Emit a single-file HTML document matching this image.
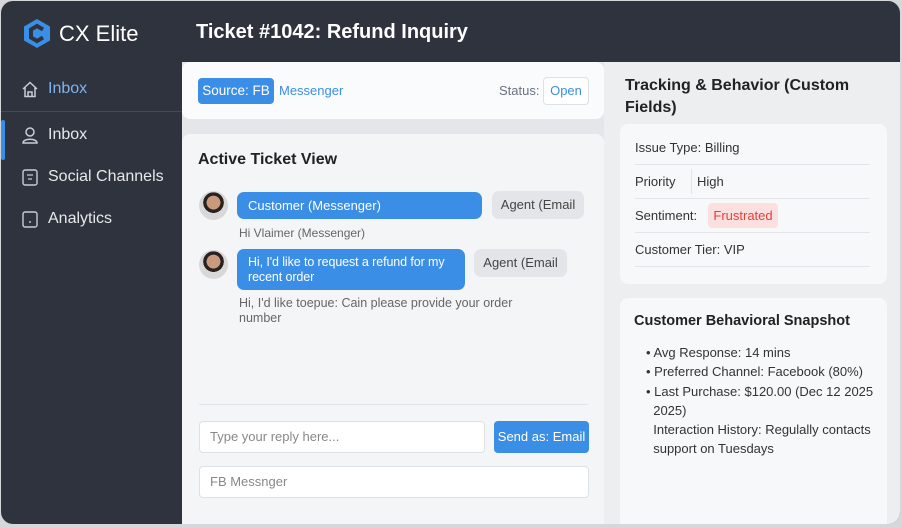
<!DOCTYPE html>
<html><head><style>
*{box-sizing:border-box;margin:0;padding:0}
body{width:902px;height:528px;background:#d5d7da;font-family:"Liberation Sans",sans-serif;overflow:hidden;position:relative}
.frame{position:absolute;left:1px;top:1px;width:899px;height:523px;border-radius:12px;background:#2e333d;overflow:hidden}
.logo{position:absolute;left:22px;top:17px}
.brand{position:absolute;left:58px;top:20px;color:#fff;font-size:22px}
.title{position:absolute;left:195px;top:20px;color:#fff;font-size:20px;font-weight:bold}
.nav{position:absolute;left:0;width:181px;color:#e6e8ec;font-size:16px}
.nav span{position:absolute;left:47px;white-space:nowrap}
.main{position:absolute;left:181px;top:61px;width:422px;height:462px;background:#e4e6e9}
.right{position:absolute;left:603px;top:61px;width:296px;height:462px;background:#eceef0}
.card{position:absolute;background:#f7f8fa;border-radius:8px}
.blue{background:#3a8ee6;color:#fff}
.gray{background:#e3e5e8;color:#444;border-radius:7px}
.t{position:absolute;white-space:nowrap}
</style></head><body>
<div class="frame">
<svg class="logo" width="28" height="31" viewBox="0 0 28 31"><path d="M14 1 L27 8.5 V22.5 L14 30 L1 22.5 V8.5Z" fill="#3a8ee6"/><path d="M20 11.5 L14 8 L8 11.5 V19.5 L14 23 L20 19.5" fill="none" stroke="#2e333d" stroke-width="4"/></svg>
<div class="brand">CX Elite</div>
<div class="title">Ticket #1042: Refund Inquiry</div>
<div style="position:absolute;left:0;top:110px;width:181px;height:1px;background:#434955"></div>
<div style="position:absolute;left:0;top:119px;width:4px;height:40px;background:#3a8ee6;border-radius:2px"></div>
<div class="nav" style="top:79px"><svg style="position:absolute;left:20px;top:1px" width="18" height="17" viewBox="0 0 18 17"><path d="M2 8 L9 1.5 L16 8 M4 6.5 V15.5 H14 V6.5 M7 15.5 V11 H11 V15.5" fill="none" stroke="#c8ccd3" stroke-width="1.5"/></svg><span style="color:#7fb4ee">Inbox</span></div>
<div class="nav" style="top:125px"><svg style="position:absolute;left:20px;top:0" width="18" height="18" viewBox="0 0 18 18"><circle cx="9" cy="6" r="4" fill="none" stroke="#c8ccd3" stroke-width="1.5"/><path d="M2 17 C2 12 16 12 16 17 Z" fill="none" stroke="#c8ccd3" stroke-width="1.5"/></svg><span>Inbox</span></div>
<div class="nav" style="top:167px"><svg style="position:absolute;left:21px;top:1px" width="16" height="17" viewBox="0 0 16 17"><rect x="1" y="1" width="14" height="15" rx="2" fill="none" stroke="#c8ccd3" stroke-width="1.4"/><path d="M5 6H11M6 10H10" stroke="#c8ccd3" stroke-width="1.2"/></svg><span>Social Channels</span></div>
<div class="nav" style="top:209px"><svg style="position:absolute;left:21px;top:1px" width="16" height="17" viewBox="0 0 16 17"><rect x="1" y="1" width="14" height="15" rx="2" fill="none" stroke="#c8ccd3" stroke-width="1.4"/><path d="M8 10V12" stroke="#c8ccd3" stroke-width="1.4"/></svg><span>Analytics</span></div>

<div class="main">
<div class="card" style="left:0;top:0;width:422px;height:57px;background:#fafbfc">
<div class="t blue" style="left:16px;top:16px;width:76px;height:26px;border-radius:4px;font-size:13.5px;line-height:26px;text-align:center">Source: FB</div>
<div class="t" style="left:97px;top:21px;color:#3a8ee6;font-size:13px">Messenger</div>
<div class="t" style="left:317px;top:21px;color:#6a7280;font-size:13px">Status:</div>
<div class="t" style="left:361px;top:15px;width:46px;height:28px;border:1px solid #dde0e4;border-radius:4px;background:#fff;color:#3a8ee6;font-size:13px;line-height:26px;text-align:center">Open</div>
</div>
<div class="card" style="left:0;top:72px;width:422px;height:395px;background:#f3f5f7">
<div class="t" style="left:16px;top:17px;font-size:16px;font-weight:bold;color:#222">Active Ticket View</div>
<div class="t" style="left:17px;top:57px;width:29px;height:29px;border-radius:50%;background:radial-gradient(circle at 50% 40%,#c99a7c 0 30%,#2a2220 31% 45%,#d8d8d8 46%)"></div>
<div class="t blue" style="left:55px;top:58px;width:245px;height:27px;border-radius:7px;font-size:13px;line-height:27px;padding-left:11px">Customer (Messenger)</div>
<div class="t gray" style="left:310px;top:57px;width:92px;height:28px;font-size:13px;line-height:28px;text-align:center">Agent (Email</div>
<div class="t" style="left:57px;top:92px;font-size:12px;color:#666">Hi Vlaimer (Messenger)</div>
<div class="t" style="left:17px;top:116px;width:29px;height:29px;border-radius:50%;background:radial-gradient(circle at 50% 40%,#c99a7c 0 30%,#2a2220 31% 45%,#d8d8d8 46%)"></div>
<div class="t blue" style="left:55px;top:115px;width:228px;height:41px;border-radius:7px;font-size:12.5px;line-height:15px;padding:6px 6px 6px 11px;white-space:normal;letter-spacing:-0.1px">Hi, I'd like to request a refund for my recent order</div>
<div class="t gray" style="left:292px;top:115px;width:93px;height:28px;font-size:13px;line-height:28px;text-align:center">Agent (Email</div>
<div class="t" style="left:57px;top:162px;width:300px;font-size:12.5px;color:#666;line-height:15px;white-space:normal">Hi, I'd like toepue: Cain please provide your order number</div>
<div class="t" style="left:17px;top:270px;width:389px;height:1px;background:#e0e3e7"></div>
<div class="t" style="left:17px;top:287px;width:286px;height:32px;border:1px solid #dde0e4;border-radius:4px;background:#fff;color:#888;font-size:13px;line-height:30px;padding-left:10px">Type your reply here...</div>
<div class="t blue" style="left:312px;top:287px;width:95px;height:32px;border-radius:4px;font-size:13px;line-height:32px;text-align:center">Send as: Email</div>
<div class="t" style="left:17px;top:332px;width:390px;height:32px;border:1px solid #dde0e4;border-radius:4px;background:#fff;color:#888;font-size:13px;line-height:30px;padding-left:10px">FB Messnger</div>
</div>
</div>

<div class="right">
<div class="t" style="left:21px;top:13px;width:250px;font-size:16px;font-weight:bold;color:#222;line-height:22px;white-space:normal">Tracking &amp; Behavior (Custom Fields)</div>
<div class="card" style="left:16px;top:62px;width:267px;height:160px">
<div class="t" style="left:15px;top:16px;font-size:13px;color:#333">Issue Type: Billing</div>
<div class="t" style="left:15px;top:40px;width:235px;height:1px;background:#e2e4e7"></div>
<div class="t" style="left:15px;top:50px;font-size:13px;color:#333">Priority</div>
<div class="t" style="left:71px;top:45px;width:1px;height:25px;background:#e2e4e7"></div>
<div class="t" style="left:77px;top:50px;font-size:13px;color:#333">High</div>
<div class="t" style="left:15px;top:74px;width:235px;height:1px;background:#e2e4e7"></div>
<div class="t" style="left:15px;top:84px;font-size:13px;color:#333">Sentiment:</div>
<div class="t" style="left:88px;top:79px;width:70px;height:25px;border-radius:4px;background:#fbe0df;color:#e0413b;font-size:13px;line-height:25px;text-align:center">Frustrated</div>
<div class="t" style="left:15px;top:108px;width:235px;height:1px;background:#e2e4e7"></div>
<div class="t" style="left:15px;top:118px;font-size:13px;color:#333">Customer Tier: VIP</div>
<div class="t" style="left:15px;top:142px;width:235px;height:1px;background:#e2e4e7"></div>
</div>
<div class="card" style="left:16px;top:236px;width:267px;height:240px">
<div class="t" style="left:14px;top:15px;font-size:14.5px;font-weight:bold;color:#222">Customer Behavioral Snapshot</div>
<div class="t" style="left:26px;top:45px;font-size:13px;color:#333;line-height:19.3px">• Avg Response: 14 mins<br>• Preferred Channel: Facebook (80%)<br>• Last Purchase: $120.00 (Dec 12 2025<br>&nbsp;&nbsp;2025)<br>&nbsp;&nbsp;Interaction History: Regulally contacts<br>&nbsp;&nbsp;support on Tuesdays</div>
</div>
</div>
</div>
</body></html>
